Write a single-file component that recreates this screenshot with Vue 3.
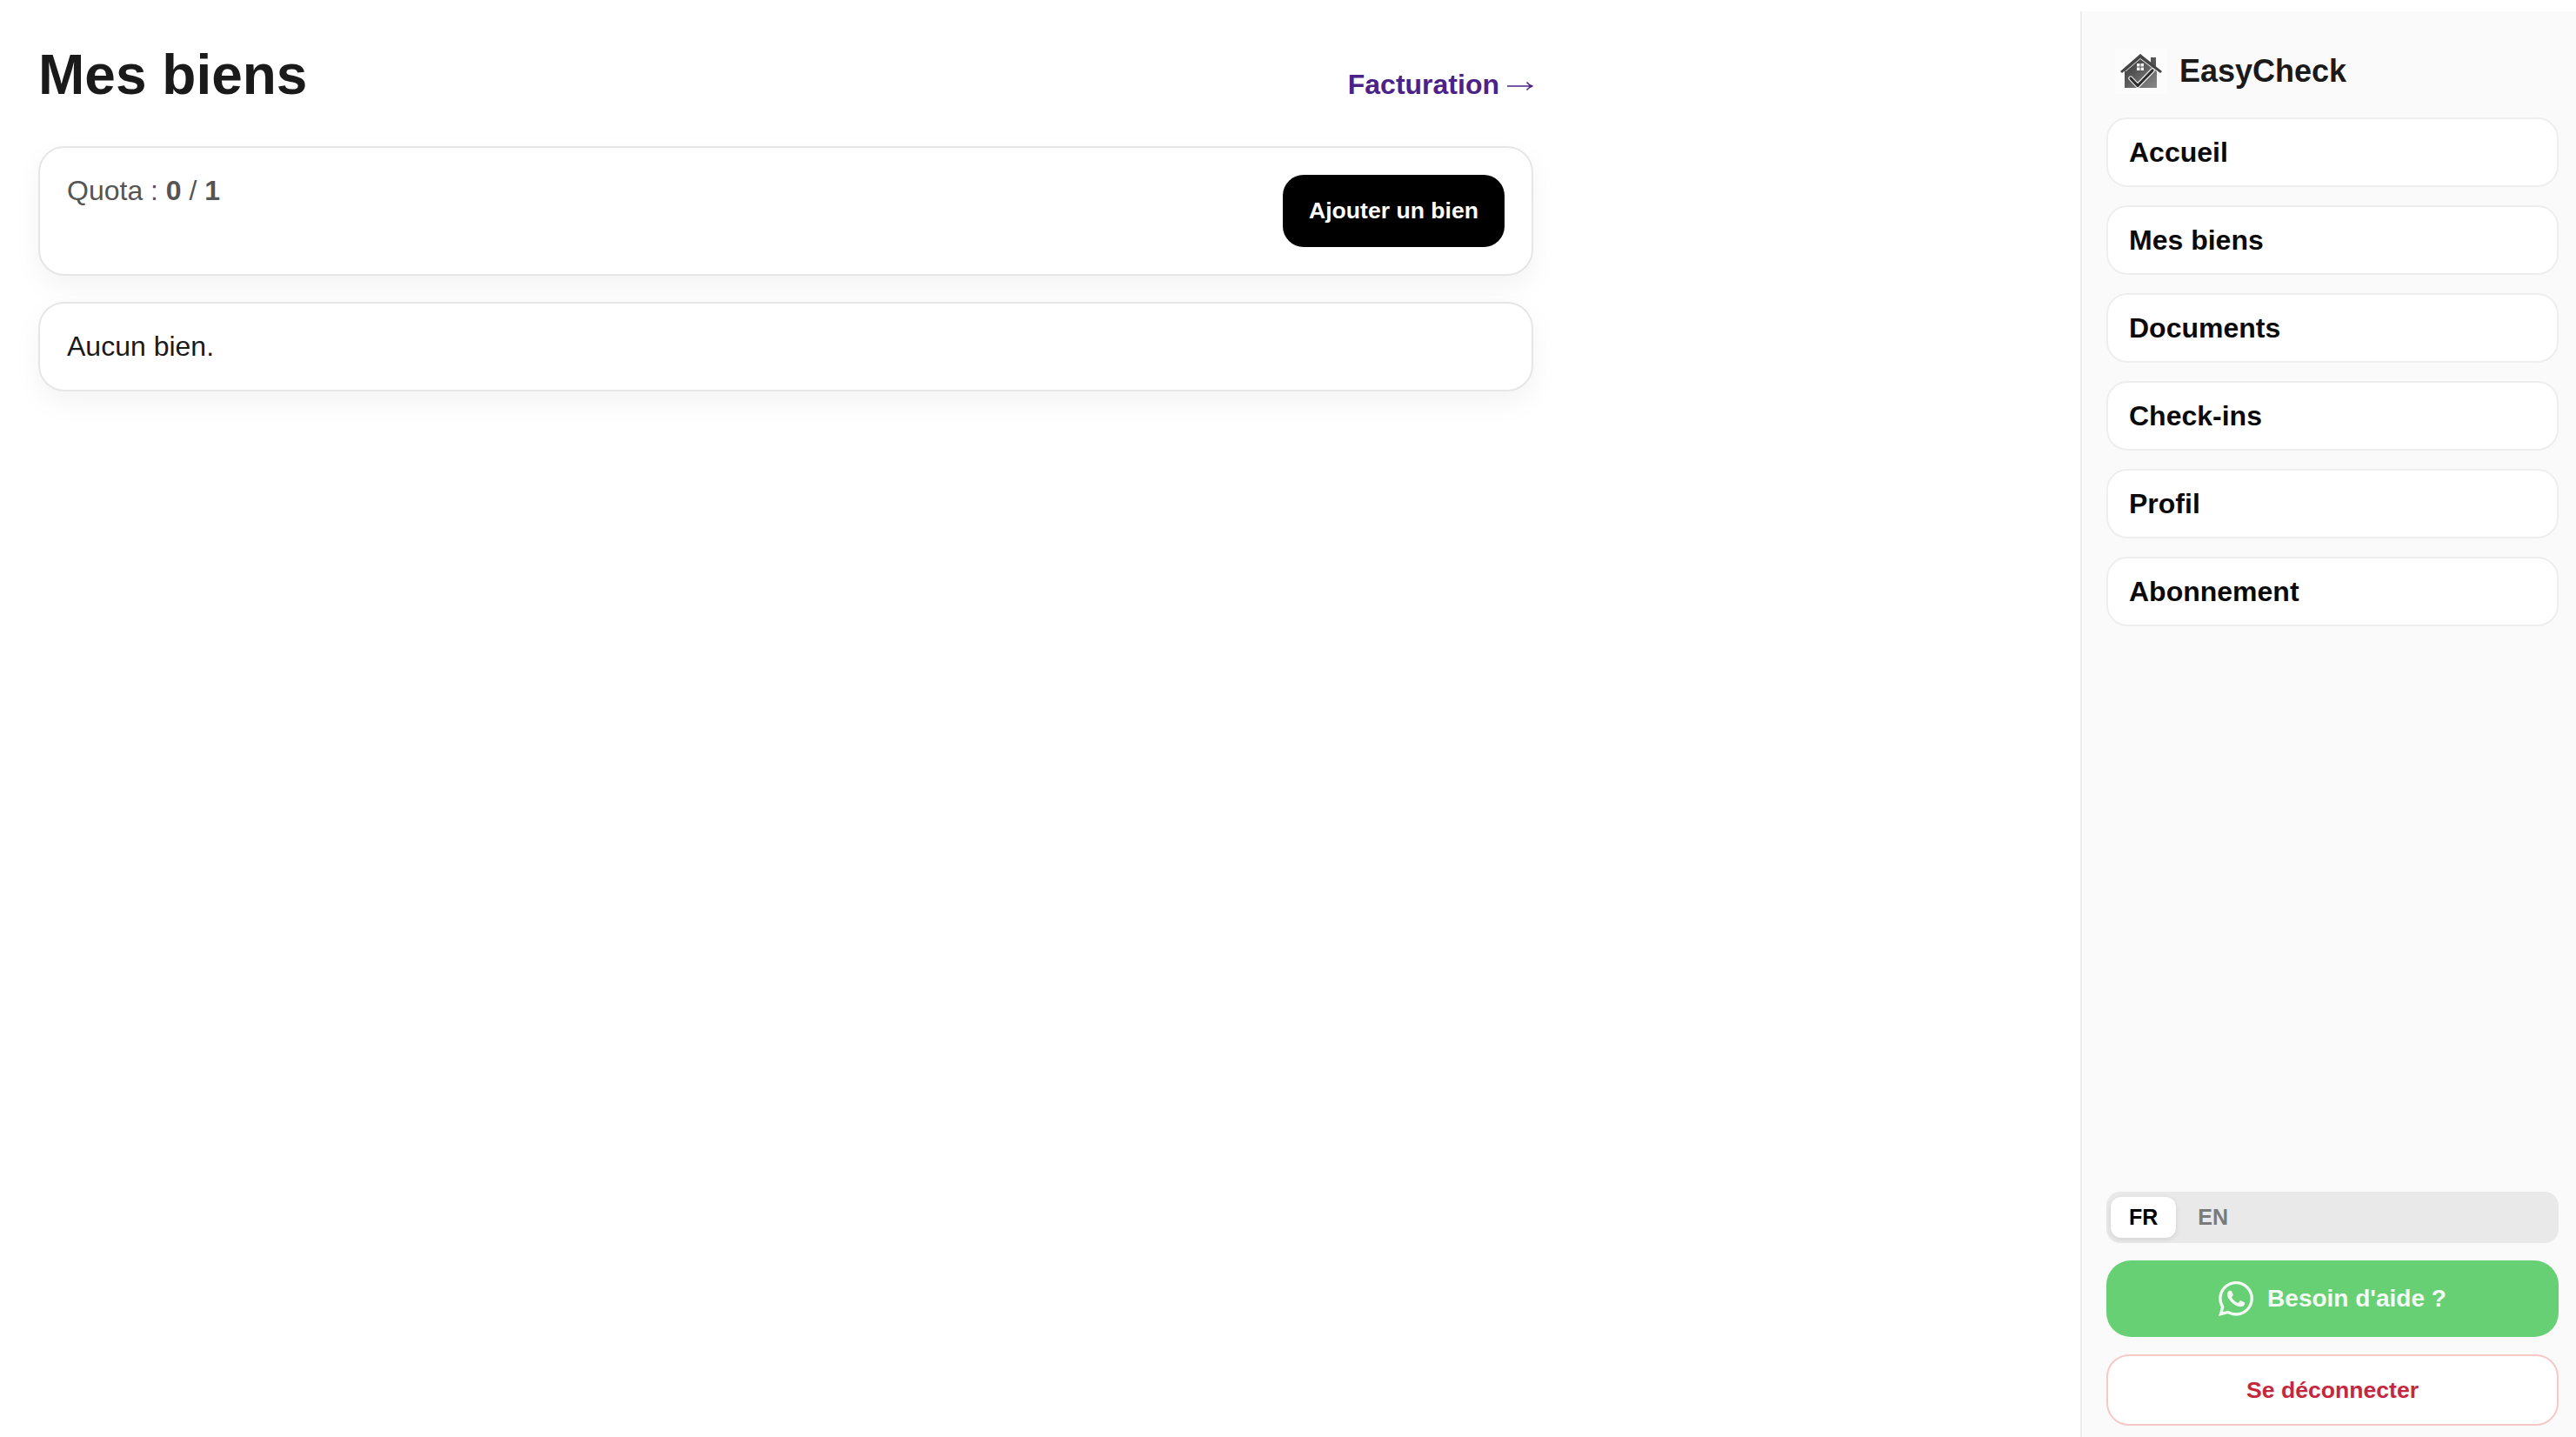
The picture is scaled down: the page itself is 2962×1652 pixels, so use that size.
<template>
  <div class="layout">
    <main class="main">
      <header class="page-header">
        <h1>Mes biens</h1>
        <a class="billing-link" href="#">
          <span>Facturation</span>
          <svg class="billing-arrow" viewBox="0 0 30 12" width="30" height="12" fill="none" stroke="currentColor" stroke-width="1.4">
            <path d="M0 6 H29 M22.5 1.5 Q25 5 29.3 6 Q25 7 22.5 10.5" />
          </svg>
        </a>
      </header>
      <section class="card quota-card">
        <p class="quota">Quota : <strong>0</strong> / <strong>1</strong></p>
        <button class="add-btn">Ajouter un bien</button>
      </section>
      <section class="card">
        <p class="empty">Aucun bien.</p>
      </section>
    </main>

    <aside class="sidebar">
      <div class="brand">
        <span class="brand-logo">
          <svg viewBox="0 0 48 40" width="48" height="40">
            <defs>
              <linearGradient id="houseFill" x1="0" y1="0" x2="1" y2="1">
                <stop offset="0" stop-color="#333" />
                <stop offset="1" stop-color="#8a8a8a" />
              </linearGradient>
            </defs>
            <rect x="35" y="4" width="6" height="12" fill="#555" />
            <path d="M5 19 L23 4 L42 19 V39 H5 Z" fill="url(#houseFill)" />
            <path d="M0 20 L23 0 L48 20 L46 22 L23 4.5 L2 22 Z" fill="#444" />
            <path d="M6 20 L23 5.5 L42 20" fill="none" stroke="#e8e8e8" stroke-width="1" />
            <rect x="19" y="11" width="8" height="8" fill="#f4f4f4" />
            <path d="M23 11 V19 M19 15 H27" stroke="#555" stroke-width="1" />
            <path d="M12 28 L20 36.5 L37 19" fill="none" stroke="#eee" stroke-width="5.4" stroke-linecap="round" stroke-linejoin="round" />
            <path d="M12 28 L20 36.5 L37 19" fill="none" stroke="#2e2e2e" stroke-width="3.2" stroke-linecap="round" stroke-linejoin="round" />
          </svg>
        </span>
        <span class="brand-name">EasyCheck</span>
      </div>

      <nav class="nav">
        <a v-for="item in navItems" :key="item" class="nav-item" href="#">{{ item }}</a>
      </nav>

      <div class="lang-switch">
        <button
          v-for="lang in langs"
          :key="lang"
          :class="['lang-btn', { active: activeLang === lang }]"
          @click="activeLang = lang"
        >{{ lang }}</button>
      </div>
      <a class="help-btn" href="#">
        <svg viewBox="0 0 24 24" width="40" height="40" fill="currentColor">
          <path d="M17.472 14.382c-.297-.149-1.758-.867-2.03-.967-.273-.099-.471-.148-.67.15-.197.297-.767.966-.94 1.164-.173.199-.347.223-.644.075-.297-.15-1.255-.463-2.39-1.475-.883-.788-1.48-1.761-1.653-2.059-.173-.297-.018-.458.13-.606.134-.133.298-.347.446-.52.149-.174.198-.298.298-.497.099-.198.05-.371-.025-.52-.075-.149-.669-1.612-.916-2.207-.242-.579-.487-.5-.669-.51-.173-.008-.371-.01-.57-.01-.198 0-.52.074-.792.372-.272.297-1.04 1.016-1.04 2.479 0 1.462 1.065 2.875 1.213 3.074.149.198 2.096 3.2 5.077 4.487.709.306 1.262.489 1.694.625.712.227 1.36.195 1.871.118.571-.085 1.758-.719 2.006-1.413.248-.694.248-1.289.173-1.413-.074-.124-.272-.198-.57-.347m-5.421 7.403h-.004a9.87 9.87 0 01-5.031-1.378l-.361-.214-3.741.982.998-3.648-.235-.374a9.86 9.86 0 01-1.51-5.26c.001-5.45 4.436-9.884 9.888-9.884 2.64 0 5.122 1.03 6.988 2.898a9.825 9.825 0 012.893 6.994c-.003 5.45-4.437 9.884-9.885 9.884m8.413-18.297A11.815 11.815 0 0012.05 0C5.495 0 .16 5.335.157 11.892c0 2.096.547 4.142 1.588 5.945L.057 24l6.305-1.654a11.882 11.882 0 005.683 1.448h.005c6.554 0 11.89-5.335 11.893-11.893a11.821 11.821 0 00-3.48-8.413z" />
        </svg>
        <span>Besoin d'aide ?</span>
      </a>
      <button class="logout-btn">Se déconnecter</button>
    </aside>
  </div>
</template>

<script setup>
import { ref } from 'vue'

const navItems = ['Accueil', 'Mes biens', 'Documents', 'Check-ins', 'Profil', 'Abonnement']
const langs = ['FR', 'EN']
const activeLang = ref('FR')
</script>

<style>
html, body {
  margin: 0;
  background: #fff;
}
</style>

<style scoped>
.layout {
  display: flex;
  justify-content: space-between;
  height: 1652px;
  overflow: hidden;
  font-family: "Liberation Sans", Arial, sans-serif;
  color: #1a1a1a;
}

.main {
  width: 1719px;
  padding: 48px 0 0 44px;
}

.page-header {
  display: flex;
  justify-content: space-between;
  align-items: baseline;
  margin-bottom: 43px;
}

h1 {
  margin: 0;
  font-size: 64px;
  line-height: 77px;
  font-weight: 700;
  color: #1a1a1a;
}

.billing-link {
  display: inline-flex;
  align-items: center;
  gap: 9px;
  font-size: 32px;
  font-weight: 700;
  color: #4a2288;
  text-decoration: none;
}

.billing-arrow {
  margin-top: 3px;
}

.card {
  background: #fff;
  border: 2px solid #e6e6e6;
  border-radius: 30px;
  padding: 31px;
  margin-bottom: 30px;
  box-shadow: 0 12px 32px rgba(0, 0, 0, 0.05);
}

.quota-card {
  display: flex;
  justify-content: space-between;
  align-items: flex-start;
}

.quota,
.empty {
  margin: 0;
  font-size: 32px;
}

.quota {
  color: #555;
}

.add-btn {
  width: 255px;
  height: 83px;
  border: none;
  border-radius: 24px;
  background: #000;
  color: #fff;
  font: 700 26.6px "Liberation Sans", Arial, sans-serif;
}

.sidebar {
  width: 570px;
  box-sizing: border-box;
  margin-top: 13px;
  padding: 0 20px 13px 28px;
  background: #fafafa;
  border-left: 2px solid #ececec;
  display: flex;
  flex-direction: column;
}

.brand {
  display: flex;
  align-items: center;
  gap: 14px;
  height: 122px;
  box-sizing: border-box;
  padding: 34px 0 18px 16px;
}

.brand-logo {
  display: flex;
  align-items: center;
  justify-content: center;
  width: 48px;
  height: 40px;
  padding: 6px;
  margin-left: -6px;
  background: #fcfcfc;
}

.brand-name {
  font-size: 36px;
  font-weight: 700;
  color: #1a1a1a;
}

.nav {
  flex: 1;
  display: flex;
  flex-direction: column;
  gap: 21px;
}

.nav-item {
  height: 80px;
  box-sizing: border-box;
  display: flex;
  align-items: center;
  padding: 0 24px;
  background: #fff;
  border: 2px solid #eee;
  border-radius: 24px;
  font-size: 32px;
  font-weight: 700;
  color: #0a0a0a;
  text-decoration: none;
}

.lang-switch {
  display: flex;
  gap: 4px;
  height: 59px;
  box-sizing: border-box;
  padding: 6px 5px;
  background: #e9e9e9;
  border-radius: 16px;
}

.lang-btn {
  border: none;
  background: transparent;
  padding: 0 21px;
  border-radius: 12px;
  font: 700 25px "Liberation Sans", Arial, sans-serif;
  color: #7a7a7a;
}

.lang-btn.active {
  background: #fff;
  color: #000;
  box-shadow: 0 2px 6px rgba(0, 0, 0, 0.1);
}

.help-btn {
  display: flex;
  align-items: center;
  justify-content: center;
  gap: 16px;
  height: 88px;
  margin-top: 20px;
  background: #67d074;
  border-radius: 28px;
  color: #f4fbf5;
  font-size: 28px;
  font-weight: 700;
  text-decoration: none;
}

.logout-btn {
  height: 82px;
  margin-top: 20px;
  background: #fff;
  border: 2px solid #f7c8c8;
  border-radius: 26px;
  color: #c4283f;
  font: 700 26.6px "Liberation Sans", Arial, sans-serif;
}
</style>
